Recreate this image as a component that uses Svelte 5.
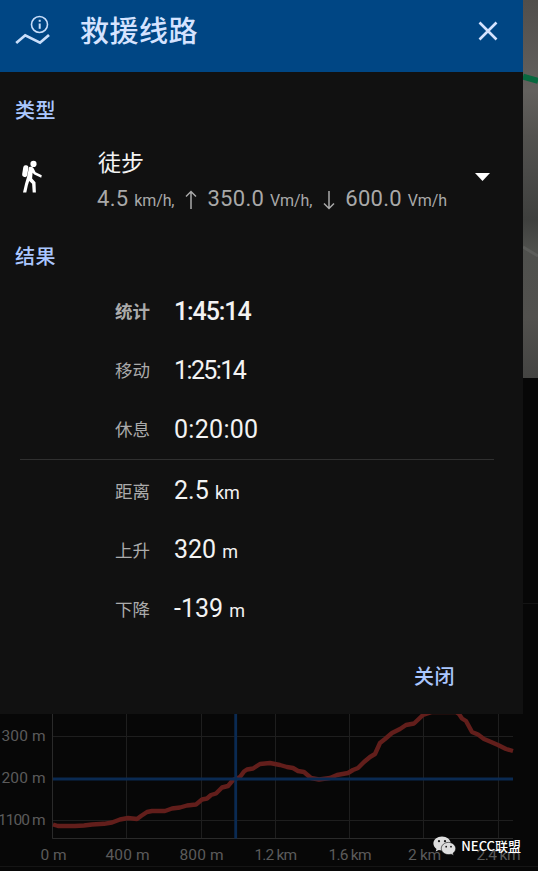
<script lang="ts">
  const times = [
    { label: '统计', value: '1:45:14', kind: 'total' },
    { label: '移动', value: '1:25:14', kind: 'moving' },
    { label: '休息', value: '0:20:00', kind: 'rest' },
  ]

  const measures = [
    { label: '距离', value: '2.5', unit: 'km' },
    { label: '上升', value: '320', unit: 'm' },
    { label: '下降', value: '-139', unit: 'm' },
  ]

  const xTicks = [
    { x: 52.5, label: '0 m', from: 40.5, width: 26 },
    { x: 126.5, label: '400 m', from: 105.5, width: 44 },
    { x: 201.5, label: '800 m', from: 179.5, width: 44 },
    { x: 275.5, label: '1.2 km', from: 254.5, width: 42.5 },
    { x: 349.5, label: '1.6 km', from: 328.5, width: 43 },
    { x: 423.5, label: '2 km', from: 408, width: 33 },
    { x: 498.5, label: '2.4 km', from: 476.5, width: 44 },
  ]

  const yTicks = [
    { y: 736.5, label: '300 m', from: 1.5, width: 44 },
    { y: 778.5, label: '200 m', from: 1.5, width: 44 },
    { y: 820.5, label: '1100 m', from: -2, width: 47.5 },
  ]

  const profile = [
    [53, 824.5], [58, 826], [75, 826], [84, 825.5], [92, 824.5], [104, 823.8],
    [112, 822.5], [120, 819.5], [128, 818], [137, 819], [141, 816], [147, 812],
    [152, 811], [165, 811], [172, 808.5], [180, 807.5], [187, 805.5],
    [196, 804.5], [202, 799.5], [207, 798.5], [211, 795], [216, 793.5],
    [222, 787.5], [228, 786], [233, 780], [240, 777], [244, 771.5],
    [247, 769.5], [253, 768.5], [260, 764], [270, 763], [280, 765], [287, 767],
    [293, 768], [298, 771], [304, 772], [311, 778], [319, 779.5], [330, 778],
    [337, 775], [348, 773], [353, 770], [358, 768], [364, 762], [370, 757],
    [375, 754], [380, 743], [385, 739], [392, 733], [400, 729], [406, 725],
    [414, 723.5], [423, 715], [432, 712], [456, 712], [459, 714], [462, 718.5],
    [466, 721], [472, 732], [478, 734.5], [484, 739], [490, 741.5], [498, 745],
    [506, 749], [513, 751],
  ]
  const points = profile.map((p) => p.join(',')).join(' ')
</script>

<div class="screen">
  <div class="top">
    <section class="dialog">
      <header>
        <svg class="route" width="36" height="32" viewBox="0 0 36 32">
          <path d="M1.2 28 10.2 20.3 25 27.7 34 19.900" stroke-width="2.7" />
          <circle cx="24.5" cy="9.5" r="8" stroke-width="1.6" />
          <path d="M24.7 8.500v5.3" stroke-width="2" />
          <path d="M24.7 4.800v2" stroke-width="2" />
        </svg>
        <h1>救援线路</h1>
        <svg class="close" width="20" height="20" viewBox="0 0 20 20">
          <path d="M1.5 1.5 18.5 18.5M18.5 1.5 1.5 18.5" />
        </svg>
      </header>

      <h2>类型</h2>
      <div class="activity">
        <svg class="hiker" width="22" height="34" viewBox="0 0 22 34">
          <circle cx="12.5" cy="3.9" r="3.1" />
          <rect x="1.7" y="5.1" width="5.2" height="12" rx="2.4" transform="rotate(9 4 11)" />
          <path d="M8 7.2C10 6.4 12 7 12.7 8.6L14.6 12.3 20.8 15.2 20.2 17.7 13.3 14.6 11.6 12.7 11.1 18.5 14.5 22.2 14.9 32.6H11.7L11.1 23.8 8.2 21 6.8 25.4 5.3 32.6H2L4.1 23.4 6.1 16.8Z" />
        </svg>
        <div class="mode">
          <div class="mode-name">徒步</div>
          <div class="speeds">
            <span class="speed">4.5 <small>km/h,</small></span>
            <svg width="12" height="20" viewBox="0 0 12 20"><path d="M6 19V1.5M1 6.5 6 1.5 11 6.5" /></svg>
            <span class="speed">350.0 <small>Vm/h,</small></span>
            <svg width="12" height="20" viewBox="0 0 12 20"><path d="M6 1v17.5M1 13.5 6 18.5 11 13.5" /></svg>
            <span class="speed">600.0 <small>Vm/h</small></span>
          </div>
        </div>
        <svg class="caret" width="15" height="8" viewBox="0 0 15 8"><path d="M0 0H15L7.5 8Z" /></svg>
      </div>

      <h2>结果</h2>
      <div class="results times">
        {#each times as row}
          <div class="row {row.kind}">
            <span class="label">{row.label}</span>
            <span class="value">{row.value}</span>
          </div>
        {/each}
      </div>
      <hr />
      <div class="results">
        {#each measures as row}
          <div class="row">
            <span class="label">{row.label}</span>
            <span class="value">{row.value} <small>{row.unit}</small></span>
          </div>
        {/each}
      </div>

      <footer>关闭</footer>
    </section>

    <aside>
      <svg class="map" width="15" height="378" viewBox="0 0 15 378">
        <defs>
          <linearGradient id="terrain" x1="0" y1="0" x2="0" y2="1">
            <stop offset="0" stop-color="#514e4b" />
            <stop offset=".24" stop-color="#63615e" />
            <stop offset=".36" stop-color="#53524f" />
            <stop offset=".44" stop-color="#4c4c4a" />
            <stop offset=".58" stop-color="#3f403e" />
            <stop offset=".66" stop-color="#4f504d" />
            <stop offset=".84" stop-color="#52514e" />
            <stop offset="1" stop-color="#444442" />
          </linearGradient>
        </defs>
        <rect width="15" height="378" fill="url(#terrain)" />
        <path d="M0 247 15 256" stroke="#5c5d5a" stroke-width="3" />
        <path d="M0 76.5 15 81" stroke="#07683f" stroke-width="6" />
      </svg>
      <div class="panel"></div>
    </aside>
  </div>

  <svg class="chart" width="538" height="157" viewBox="0 714 538 157">
    {#each xTicks as tick}
      <path class="grid" d="M{tick.x} 714V838.5" />
      <text x={tick.from} y="860" textLength={tick.width}>{tick.label}</text>
    {/each}
    {#each yTicks as tick}
      <path class="grid" d="M52.5 {tick.y}H513" />
      <text x={tick.from} y={tick.y + 4.5} textLength={tick.width}>{tick.label}</text>
    {/each}
    <path class="grid axis" d="M52.5 714V838.5H513" />
    <polyline class="profile" {points} />
    <path class="cursor" d="M235.7 714V838.5M53 779H513" />
    <path class="edge" d="M0 866.5H538" />
  </svg>

  <div class="watermark">
    <svg width="23" height="20" viewBox="0 0 23 20">
      <path d="M9 .5C4.2.5.4 3.6.4 7.5c0 2.2 1.2 4.1 3.1 5.4L2.7 15.600l3-1.600c1 .3 2.1.5 3.3.5 4.8 0 8.7-3.1 8.7-7S13.800.5 9 .5Z" />
      <path class="front" d="M15.500 6.400c-4 0-7.200 2.700-7.200 6.100s3.200 6.100 7.200 6.100c.9 0 1.800-.1 2.600-.4l2.600 1.400-.7-2.300c1.600-1.100 2.700-2.800 2.700-4.800 0-3.400-3.200-6.100-7.200-6.100Z" />
      <g class="eyes">
        <circle cx="6" cy="5.200" r="1.100" />
        <circle cx="12" cy="5.200" r="1.100" />
        <circle cx="13.200" cy="10.700" r=".9" />
        <circle cx="18" cy="10.700" r=".9" />
      </g>
    </svg>
    <span>NECC联盟</span>
  </div>
</div>

<style>
  :global(body) {
    margin: 0;
    background: #070707;
  }
  .screen {
    position: relative;
    width: 538px;
    height: 871px;
    overflow: hidden;
    background: #070707;
    font-family: Roboto, 'Noto Sans CJK SC', sans-serif;
  }
  svg {
    display: block;
    flex: none;
  }
  .top {
    display: flex;
    height: 714px;
  }
  .dialog {
    width: 523px;
    background: #111;
  }
  header {
    display: flex;
    align-items: center;
    box-sizing: border-box;
    height: 72px;
    padding: 0 25px 10px 15px;
    background: #004684;
    color: #d5e3ff;
  }
  .route {
    fill: none;
    stroke: #c9defa;
  }
  h1 {
    flex: 1;
    margin: 2px 0 0 29px;
    font-size: 29px;
    font-weight: 500;
    line-height: 40px;
    letter-spacing: 0.5px;
  }
  .close {
    fill: none;
    stroke: #d5e3ff;
    stroke-width: 2.6;
  }
  h2 {
    margin: 0;
    padding: 26px 15px 24px;
    color: #aac7ff;
    font-size: 20px;
    font-weight: 500;
    line-height: 26px;
    letter-spacing: 0.6px;
  }
  .activity {
    display: flex;
    height: 70px;
    padding: 0 33px 0 21px;
  }
  .hiker {
    margin-top: 12px;
    fill: #fff;
  }
  .mode {
    flex: 1;
    margin-left: 54px;
  }
  .mode-name {
    padding: 1px 0 0 1px;
    color: #f4f4f4;
    font-size: 23px;
    line-height: 30px;
  }
  .speeds {
    display: flex;
    align-items: center;
    margin-top: 6px;
    color: #a9a9a9;
    font-size: 22px;
    line-height: 28px;
    letter-spacing: 0.3px;
    white-space: nowrap;
  }
  .speeds svg {
    margin: 0 10px 0 11px;
    fill: none;
    stroke: #a9a9a9;
    stroke-width: 1.5;
  }
  .speeds small {
    font-size: 16px;
    letter-spacing: -0.1px;
  }
  .caret {
    margin-top: 25px;
    fill: #fff;
  }
  .results {
    display: grid;
    grid-auto-rows: 59px;
    padding-left: 115px;
  }
  .times {
    margin-top: -12px;
  }
  hr + .results {
    padding-top: 2px;
  }
  .row {
    display: flex;
    align-items: center;
  }
  .label {
    width: 59px;
    color: #ababab;
    font-size: 17.5px;
    line-height: 26px;
  }
  .value {
    color: #f3f3f3;
    font-size: 25px;
    line-height: 30px;
  }
  .value small {
    font-size: 18px;
  }
  .total .label {
    font-weight: 700;
  }
  .total .value {
    font-weight: 500;
    letter-spacing: -1.1px;
  }
  .moving .value {
    letter-spacing: -1.6px;
  }
  .rest .value {
    letter-spacing: 0.3px;
  }
  hr {
    height: 1px;
    margin: 0 29px 0 20px;
    border: 0;
    background: #303030;
  }
  footer {
    padding: 25px 68px 0 0;
    color: #aac7ff;
    font-size: 20px;
    font-weight: 500;
    line-height: 26px;
    letter-spacing: 0.5px;
    text-align: right;
  }
  aside {
    width: 15px;
  }
  .panel {
    height: 225px;
    border-bottom: 1px solid #141414;
  }
  .chart text {
    fill: #5b5b5b;
    font-size: 15.5px;
  }
  .grid {
    stroke: #1e1e1e;
    fill: none;
  }
  .axis {
    stroke: #2a2a2a;
  }
  .profile {
    fill: none;
    stroke: #621e1b;
    stroke-width: 4.4;
    stroke-linejoin: round;
  }
  .cursor {
    stroke: #0a2a52;
    stroke-width: 2.8;
  }
  .edge {
    stroke: #151515;
  }
  .watermark {
    position: absolute;
    right: 17px;
    bottom: 13px;
    display: flex;
    align-items: center;
    gap: 5px;
    color: #fff;
    font-family: 'Noto Sans CJK SC', sans-serif;
    font-size: 13px;
    font-weight: 500;
    line-height: 24px;
  }
  .watermark svg {
    fill: #dedede;
  }
  .front {
    stroke: #070707;
    stroke-width: 0.6;
  }
  .eyes {
    fill: #151515;
  }
</style>
